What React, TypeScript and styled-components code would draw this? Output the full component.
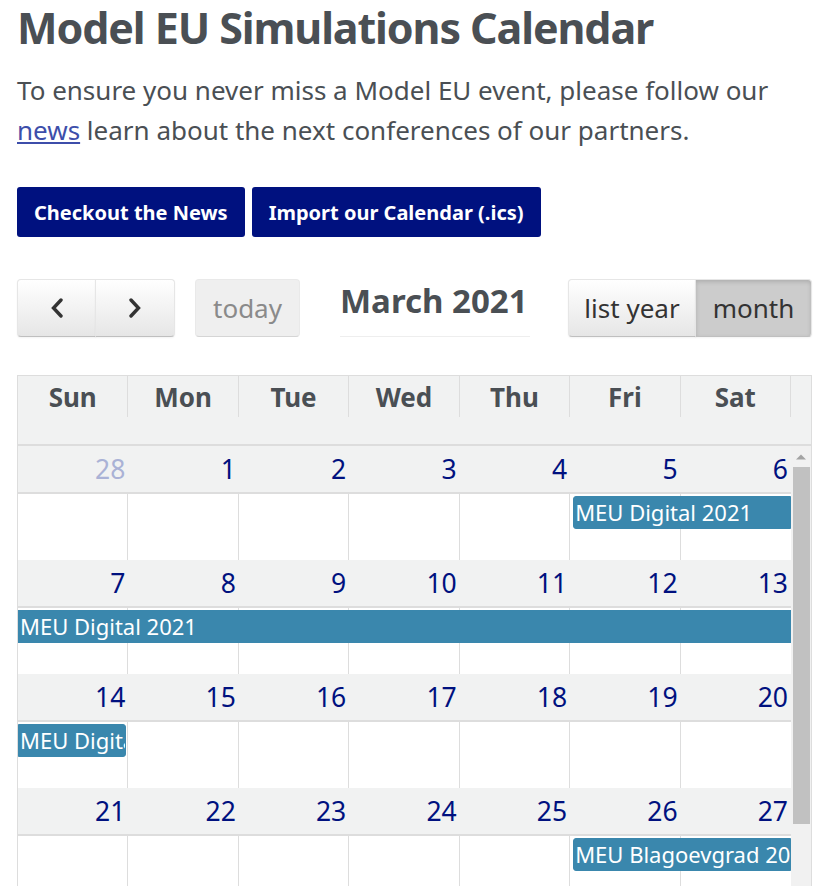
import React from "react";
import styled, { createGlobalStyle, css } from "styled-components";

const Global = createGlobalStyle`
  html, body { margin: 0; padding: 0; background: #fff; }
  body { font-family: "Noto Sans", "Open Sans", sans-serif; color: #4a4f54; }
  * { box-sizing: border-box; }
`;

const Page = styled.div`
  padding: 0 4px 0 17px;
  width: 816px;
`;

const Title = styled.h1`
  margin: 0;
  padding-top: 2px;
  font-size: 43px;
  line-height: 52px;
  font-weight: 700;
  color: #4a4f54;
  letter-spacing: -1.1px;
`;

const Intro = styled.p`
  margin: 16px 0 0;
  font-size: 26px;
  line-height: 40px;
  color: #4a4f54;
  a { color: #3d4eaa; text-decoration: underline; }
`;

const ActionRow = styled.div`
  display: flex;
  gap: 7px;
  margin-top: 37px;
`;

const ActionButton = styled.a`
  display: inline-flex;
  align-items: center;
  justify-content: center;
  height: 50px;
  padding: 0 17px;
  background: #00117f;
  color: #fff;
  font-weight: 700;
  font-size: 20px;
  border-radius: 3px;
  text-decoration: none;
`;

const Toolbar = styled.div`
  display: flex;
  align-items: flex-start;
  margin-top: 42px;
  height: 58px;
`;

const ButtonGroup = styled.div<{ $gap?: number }>`
  display: flex;
  margin-left: ${(p) => p.$gap ?? 0}px;
`;

const FcButton = styled.button<{ $active?: boolean; $disabled?: boolean; $w: number }>`
  width: ${(p) => p.$w}px;
  height: 58px;
  display: inline-flex;
  align-items: center;
  justify-content: center;
  font-family: inherit;
  font-size: 26px;
  color: #333;
  padding: 0;
  border: 1px solid;
  border-color: #e6e6e6 #e6e6e6 #bfbfbf;
  background-color: #f5f5f5;
  background-image: linear-gradient(to bottom, #fff, #e6e6e6);
  box-shadow: inset 0 1px 0 rgba(255, 255, 255, 0.2), 0 1px 2px rgba(0, 0, 0, 0.05);
  border-radius: 0;
  &:first-child { border-top-left-radius: 4px; border-bottom-left-radius: 4px; }
  &:last-child { border-top-right-radius: 4px; border-bottom-right-radius: 4px; }
  & + & { margin-left: -1px; }
  ${(p) =>
    p.$active &&
    css`
      background-color: #ccc;
      background-image: none;
      box-shadow: inset 0 2px 4px rgba(0, 0, 0, 0.15), 0 1px 2px rgba(0, 0, 0, 0.05);
    `}
  ${(p) =>
    p.$disabled &&
    css`
      background-color: #efefef;
      background-image: none;
      box-shadow: none;
      color: #8a8a8a;
      border-color: #e9e9e9 #e9e9e9 #d5d5d5;
    `}
`;

const MonthTitle = styled.h2`
  margin: 0 0 0 40px;
  width: 190px;
  height: 58px;
  font-size: 33px;
  font-weight: 700;
  line-height: 44px;
  color: #4a4f54;
  border-bottom: 1px solid #eee;
  white-space: nowrap;
`;

const Spacer = styled.div`
  flex: 1;
`;

const Calendar = styled.div`
  margin-top: 38px;
  width: 795px;
  border: 1px solid #ddd;
  border-bottom: none;
`;

const HeadRow = styled.div`
  display: grid;
  grid-template-columns: repeat(7, 1fr) 20px;
  height: 70px;
  background: #f1f2f2;
  border-bottom: 2px solid #ddd;
`;

const HeadCell = styled.div`
  height: 41px;
  display: flex;
  align-items: center;
  justify-content: center;
  font-size: 26px;
  font-weight: 700;
  color: #4a4f54;
  border-right: 1px solid #ddd;
  &:last-child { border-right: none; }
`;

const Scroller = styled.div`
  display: flex;
  height: 511px;
  overflow: hidden;
`;

const Weeks = styled.div`
  flex: 1;
  min-width: 0;
`;

const ScrollTrack = styled.div`
  flex: none;
  width: 20px;
  background: #f1f1f1;
  display: flex;
  flex-direction: column;
  align-items: center;
`;

const ScrollArrow = styled.div`
  height: 19px;
  width: 100%;
  display: flex;
  align-items: center;
  justify-content: center;
  padding-top: 2px;
`;

const ScrollThumb = styled.div`
  width: 17px;
  height: 357px;
  margin: 2px 0 0 1px;
  background: #c1c1c1;
`;

const Week = styled.div``;

const NumberRow = styled.div`
  display: grid;
  grid-template-columns: repeat(7, 1fr);
  height: 48px;
  background: #f1f2f2;
  border-bottom: 2px solid #ddd;
`;

const DayNumber = styled.div<{ $other?: boolean }>`
  display: flex;
  align-items: center;
  justify-content: flex-end;
  padding-right: 3px;
  font-size: 26.5px;
  color: ${(p) => (p.$other ? "#aab2d6" : "#00117f")};
`;

const Content = styled.div`
  display: grid;
  grid-template-columns: repeat(7, 1fr);
  grid-template-rows: auto 1fr;
  height: 66px;
`;

const Cell = styled.div<{ $col: number }>`
  grid-column: ${(p) => p.$col};
  grid-row: 1 / -1;
  border-right: ${(p) => (p.$col < 7 ? "1px solid #ddd" : "none")};
`;

const Event = styled.div<{ $start: number; $span: number; $l: boolean; $r: boolean }>`
  grid-column: ${(p) => p.$start} / span ${(p) => p.$span};
  grid-row: 1;
  z-index: 1;
  margin: 2px ${(p) => (p.$r ? "2px" : "0")} 0 ${(p) => (p.$l ? "3px" : "0")};
  height: 33px;
  background: #3a87ad;
  border: 1px solid #3a87ad;
  color: #fff;
  font-size: 22px;
  line-height: 31px;
  padding-left: 1px;
  white-space: nowrap;
  overflow: hidden;
  border-radius: ${(p) => `${p.$l ? 3 : 0}px ${p.$r ? 3 : 0}px ${p.$r ? 3 : 0}px ${p.$l ? 3 : 0}px`};
`;

type Ev = { start: number; span: number; title: string; l: boolean; r: boolean };
type WeekData = { days: [number, boolean][]; events: Ev[] };

const weeks: WeekData[] = [
  {
    days: [[28, true], [1, false], [2, false], [3, false], [4, false], [5, false], [6, false]],
    events: [{ start: 6, span: 2, title: "MEU Digital 2021", l: true, r: false }],
  },
  {
    days: [[7, false], [8, false], [9, false], [10, false], [11, false], [12, false], [13, false]],
    events: [{ start: 1, span: 7, title: "MEU Digital 2021", l: false, r: false }],
  },
  {
    days: [[14, false], [15, false], [16, false], [17, false], [18, false], [19, false], [20, false]],
    events: [{ start: 1, span: 1, title: "MEU Digital 2021", l: false, r: true }],
  },
  {
    days: [[21, false], [22, false], [23, false], [24, false], [25, false], [26, false], [27, false]],
    events: [{ start: 6, span: 2, title: "MEU Blagoevgrad 2021", l: true, r: false }],
  },
  {
    days: [[28, false], [29, false], [30, false], [31, false], [1, true], [2, true], [3, true]],
    events: [{ start: 1, span: 1, title: "MEU Blagoevgrad 2021", l: false, r: true }],
  },
  {
    days: [[4, true], [5, true], [6, true], [7, true], [8, true], [9, true], [10, true]],
    events: [],
  },
];

const dayNames = ["Sun", "Mon", "Tue", "Wed", "Thu", "Fri", "Sat"];

const Chevron = ({ dir }: { dir: "left" | "right" }) => (
  <svg width="16" height="20" viewBox="0 0 16 20" fill="none">
    <path
      d={dir === "left" ? "M12 2 L4.5 10 L12 18" : "M4 2 L11.5 10 L4 18"}
      stroke="#333"
      strokeWidth="3.4"
      strokeLinecap="round"
      strokeLinejoin="miter"
    />
  </svg>
);

export default function App() {
  return (
    <Page>
      <Global />
      <Title>Model EU Simulations Calendar</Title>
      <Intro>
        To ensure you never miss a Model EU event, please follow our <a href="#">news</a> learn about the next
        conferences of our partners.
      </Intro>
      <ActionRow>
        <ActionButton href="#">Checkout the News</ActionButton>
        <ActionButton href="#">Import our Calendar (.ics)</ActionButton>
      </ActionRow>
      <Toolbar>
        <ButtonGroup>
          <FcButton $w={79} aria-label="prev">
            <Chevron dir="left" />
          </FcButton>
          <FcButton $w={80} aria-label="next">
            <Chevron dir="right" />
          </FcButton>
        </ButtonGroup>
        <ButtonGroup $gap={20}>
          <FcButton $w={105} $disabled>
            today
          </FcButton>
        </ButtonGroup>
        <MonthTitle>March 2021</MonthTitle>
        <Spacer />
        <ButtonGroup>
          <FcButton $w={128}>list year</FcButton>
          <FcButton $w={117} $active>
            month
          </FcButton>
        </ButtonGroup>
      </Toolbar>
      <Calendar>
        <HeadRow>
          {dayNames.map((d) => (
            <HeadCell key={d}>{d}</HeadCell>
          ))}
          <HeadCell />
        </HeadRow>
        <Scroller>
          <Weeks>
            {weeks.map((w, wi) => (
              <Week key={wi}>
                <NumberRow>
                  {w.days.map(([n, other], di) => (
                    <DayNumber key={di} $other={other}>
                      {n}
                    </DayNumber>
                  ))}
                </NumberRow>
                <Content>
                  {[1, 2, 3, 4, 5, 6, 7].map((c) => (
                    <Cell key={c} $col={c} />
                  ))}
                  {w.events.map((e, ei) => (
                    <Event key={ei} $start={e.start} $span={e.span} $l={e.l} $r={e.r}>
                      {e.title}
                    </Event>
                  ))}
                </Content>
              </Week>
            ))}
          </Weeks>
          <ScrollTrack aria-hidden>
            <ScrollArrow>
              <svg width="10" height="6" viewBox="0 0 10 6">
                <polygon points="0,5.5 5,0.5 10,5.5" fill="#a3a3a3" />
              </svg>
            </ScrollArrow>
            <ScrollThumb />
          </ScrollTrack>
        </Scroller>
      </Calendar>
    </Page>
  );
}
